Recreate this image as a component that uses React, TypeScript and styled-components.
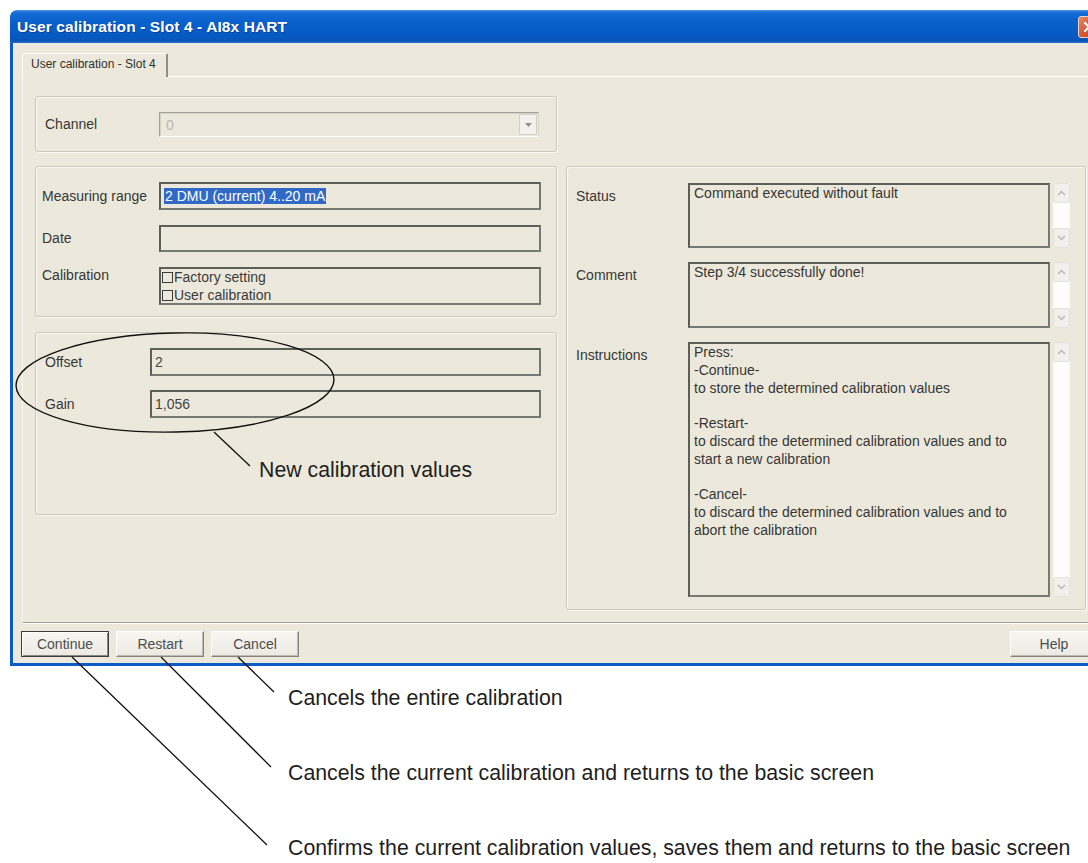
import React from "react";
import styled, { createGlobalStyle } from "styled-components";

const BEIGE = "#ECE9DC";
const FRAME_BLUE = "#0B5CC7";

const Global = createGlobalStyle`
  html, body {
    margin: 0;
    padding: 0;
    background: #ffffff;
  }
  body {
    font-family: "Liberation Sans", Arial, sans-serif;
    color: #333;
  }
  * { box-sizing: border-box; }
`;

const Page = styled.div`
  position: relative;
  width: 1088px;
  height: 863px;
  overflow: hidden;
  background: #fff;
  padding-top: 10px;
`;

/* ---------- dialog window ---------- */

const Window = styled.div`
  margin-left: 10px;
  width: 1095px;
  display: flex;
  flex-direction: column;
`;

const TitleBar = styled.div`
  height: 33px;
  border-radius: 7px 7px 0 0;
  background: linear-gradient(
    180deg,
    #4a94e6 0px,
    #1469d2 3px,
    #0a61cb 12px,
    #0659c2 26px,
    #0a55b8 31px,
    #2a72cf 33px
  );
  display: flex;
  align-items: center;
  padding: 0 5px 0 7px;
`;

const TitleText = styled.span`
  font-family: "Liberation Sans", Arial, sans-serif;
  font-weight: bold;
  font-size: 15.5px;
  color: #ffffff;
  text-shadow: 1px 1px 0 #0b3f9a;
  letter-spacing: 0.1px;
`;

const CloseButton = styled.div`
  margin-left: auto;
  width: 22px;
  height: 22px;
  border-radius: 3px;
  border: 1px solid #f4d2c4;
  background: linear-gradient(135deg, #e8876a 0%, #d45a35 50%, #c04421 100%);
  display: flex;
  align-items: center;
  justify-content: center;
`;

const Frame = styled.div`
  height: 623px;
  background: ${BEIGE};
  border: 3px solid ${FRAME_BLUE};
  border-top: none;
  display: flex;
  flex-direction: column;
  padding-top: 10px;
`;

/* ---------- tab control ---------- */

const TabStrip = styled.div`
  display: flex;
  height: 24px;
  padding-left: 9px;
`;

const Tab = styled.div`
  width: 146px;
  height: 24px;
  border-top: 1px solid #ffffff;
  border-left: 1px solid #ffffff;
  border-right: 2px solid #8f8e86;
  border-radius: 2px 2px 0 0;
  padding-left: 8px;
  font-size: 12px;
  line-height: 21px;
  color: #303030;
  white-space: nowrap;
`;

const TabFiller = styled.div`
  flex: 1;
  border-bottom: 1px solid #ffffff;
`;

const TabPage = styled.div`
  height: 546px;
  margin-left: 9px;
  border-left: 1px solid #f7f6f1;
  border-bottom: 1px solid #9e9c93;
  box-shadow: 0 1px 0 #ffffff;
  padding: 19px 0 0 12px;
`;

const Columns = styled.div`
  display: grid;
  grid-template-columns: 522px 520px;
  column-gap: 9px;
  align-items: start;
`;

const LeftColumn = styled.div`
  display: flex;
  flex-direction: column;
`;

const RightColumn = styled.div`
  padding-top: 70px;
`;

const GroupBox = styled.div<{ $h: number; $mt?: number }>`
  height: ${(p) => p.$h}px;
  margin-top: ${(p) => p.$mt ?? 0}px;
  border: 1px solid #cbc8bb;
  border-radius: 3px;
  box-shadow: inset 1px 1px 0 #faf9f4, 1px 1px 0 #faf9f4;
`;

/* ---------- form rows ---------- */

const ChannelRow = styled.div`
  display: flex;
  align-items: center;
  padding: 15px 0 0 9px;
`;

const FormGrid = styled.div<{ $label: number; $pt: number; $pl: number; $gap: number }>`
  display: grid;
  grid-template-columns: ${(p) => p.$label}px auto;
  row-gap: ${(p) => p.$gap}px;
  padding: ${(p) => p.$pt}px 0 0 ${(p) => p.$pl}px;
  align-items: center;
`;

const Label = styled.div<{ $w?: number; $top?: boolean }>`
  width: ${(p) => (p.$w ? `${p.$w}px` : "auto")};
  font-size: 14px;
  line-height: 17px;
  color: #363636;
  white-space: nowrap;
  align-self: ${(p) => (p.$top ? "start" : "center")};
`;

const Field = styled.div<{ $w: number; $h: number }>`
  width: ${(p) => p.$w}px;
  height: ${(p) => p.$h}px;
  border: 2px solid;
  border-color: #5a5f5a #767a75 #767a75 #5a5f5a;
  background: ${BEIGE};
  display: flex;
  align-items: center;
  padding: 0 3px;
  font-size: 14px;
  color: #444;
  white-space: nowrap;
`;

const Selected = styled.span`
  background: #3169c6;
  color: #ffffff;
  line-height: 16px;
  padding: 0 1px;
`;

const CheckList = styled(Field)`
  flex-direction: column;
  align-items: stretch;
  justify-content: flex-start;
  gap: 2px;
  padding: 0 1px;
`;

const CheckRow = styled.div`
  display: flex;
  align-items: center;
  height: 16px;
  font-size: 14px;
  color: #3a3a3a;
`;

const CheckBox = styled.span`
  width: 11px;
  height: 11px;
  border: 1px solid #3b3b3b;
  background: ${BEIGE};
  margin-right: 1px;
  flex: none;
`;

/* disabled combo box */

const Combo = styled.div`
  width: 380px;
  height: 25px;
  border: 1px solid;
  border-color: #a3a29a #d8d6cc #ffffff #a3a29a;
  box-shadow: inset 1px 1px 0 #d3d0c5;
  background: ${BEIGE};
  display: flex;
  align-items: center;
  padding: 0 1px 0 6px;
  font-size: 14px;
  color: #b9b7ad;
`;

const ComboArrow = styled.div`
  margin-left: auto;
  width: 18px;
  height: 21px;
  border: 1px solid #d2cfc4;
  border-radius: 1px;
  background: #f2f1ec;
  display: flex;
  align-items: center;
  justify-content: center;
`;

/* ---------- memo boxes with scroll bars ---------- */

const MemoStack = styled.div`
  display: flex;
  flex-direction: column;
  gap: 14px;
  padding: 16px 0 0 9px;
`;

const MemoRow = styled.div`
  display: flex;
  align-items: flex-start;
`;

const MemoLabel = styled.div`
  width: 112px;
  padding-top: 5px;
  font-size: 14px;
  line-height: 17px;
  color: #363636;
  white-space: nowrap;
`;

const Memo = styled.div<{ $h: number }>`
  width: 362px;
  height: ${(p) => p.$h}px;
  border: 2px solid;
  border-color: #5a5f5a #767a75 #767a75 #5a5f5a;
  background: ${BEIGE};
  padding: 0 4px;
  font-size: 14px;
  line-height: 17.8px;
  color: #363636;
  white-space: pre-line;
  overflow: hidden;
`;

const ScrollBar = styled.div<{ $h: number }>`
  width: 17px;
  height: ${(p) => p.$h}px;
  margin-left: 3px;
  display: flex;
  flex-direction: column;
  background: #fbfbf8;
`;

const ScrollButton = styled.div`
  height: 20px;
  border: 1px solid #e4e2d8;
  border-radius: 2px;
  background: #f1f0ea;
  display: flex;
  align-items: center;
  justify-content: center;
`;

const ScrollTrack = styled.div`
  flex: 1;
  margin: 0 2px;
  background: #fdfdfc;
`;

/* ---------- dialog buttons ---------- */

const ButtonRow = styled.div`
  display: flex;
  gap: 7px;
  margin-top: 8px;
  padding: 0 4px 0 8px;
`;

const DialogButton = styled.button<{ $default?: boolean; $push?: boolean }>`
  width: 88px;
  height: 26px;
  margin-left: ${(p) => (p.$push ? "auto" : "0")};
  font-family: "Liberation Sans", Arial, sans-serif;
  font-size: 14px;
  color: #4d4d4d;
  background: linear-gradient(180deg, #f7f6f1 0%, #eceae2 100%);
  padding: 0;
  border: 1px solid;
  border-color: ${(p) =>
    p.$default ? "#3c3c3c" : "#ffffff #85837c #85837c #ffffff"};
  box-shadow: ${(p) =>
    p.$default
      ? "inset 1px 1px 0 #ffffff, inset -1px -1px 0 #8a8880"
      : "inset -1px -1px 0 #bcbab1"};
`;

/* ---------- annotations ---------- */

const Notes = styled.div`
  display: flex;
  flex-direction: column;
  gap: 51px;
  margin-top: 20px;
  padding-left: 288px;
`;

const NoteText = styled.div`
  font-family: "Liberation Sans", Arial, sans-serif;
  font-size: 21.3px;
  line-height: 24px;
  color: #1e1e1e;
  white-space: nowrap;
`;

const FloatingNote = styled(NoteText)`
  position: absolute;
  left: 259px;
  top: 458px;
`;

const Overlay = styled.svg`
  position: absolute;
  left: 0;
  top: 0;
  pointer-events: none;
`;

const Chevron = ({ up }: { up?: boolean }) => (
  <svg width="9" height="6" viewBox="0 0 9 6">
    <polyline
      points={up ? "1,5 4.5,1.5 8,5" : "1,1 4.5,4.5 8,1"}
      fill="none"
      stroke="#b7b6b0"
      strokeWidth="1.4"
    />
  </svg>
);

const MemoWithBar = ({ h, text }: { h: number; text: string }) => (
  <>
    <Memo $h={h}>{text}</Memo>
    <ScrollBar $h={h}>
      <ScrollButton>
        <Chevron up />
      </ScrollButton>
      <ScrollTrack />
      <ScrollButton>
        <Chevron />
      </ScrollButton>
    </ScrollBar>
  </>
);

const instructions = `Press:
-Continue-
to store the determined calibration values

-Restart-
to discard the determined calibration values and to
start a new calibration

-Cancel-
to discard the determined calibration values and to
abort the calibration`;

export default function App() {
  return (
    <>
      <Global />
      <Page>
        <Window>
          <TitleBar>
            <TitleText>User calibration - Slot 4 - AI8x HART</TitleText>
            <CloseButton>
              <svg width="12" height="12" viewBox="0 0 12 12">
                <path d="M2 2 L10 10 M10 2 L2 10" stroke="#fff" strokeWidth="2.2" strokeLinecap="round" />
              </svg>
            </CloseButton>
          </TitleBar>
          <Frame>
            <TabStrip>
              <Tab>User calibration - Slot 4</Tab>
              <TabFiller />
            </TabStrip>
            <TabPage>
              <Columns>
                <LeftColumn>
                  <GroupBox $h={56}>
                    <ChannelRow>
                      <Label $w={114}>Channel</Label>
                      <Combo>
                        0
                        <ComboArrow>
                          <svg width="7" height="4" viewBox="0 0 7 4">
                            <path d="M0 0 H7 L3.5 4 Z" fill="#8f8e88" />
                          </svg>
                        </ComboArrow>
                      </Combo>
                    </ChannelRow>
                  </GroupBox>

                  <GroupBox $h={151} $mt={14}>
                    <FormGrid $label={117} $pt={15} $pl={6} $gap={15}>
                      <Label>Measuring range</Label>
                      <Field $w={382} $h={28}>
                        <Selected>2 DMU (current) 4..20 mA</Selected>
                      </Field>
                      <Label>Date</Label>
                      <Field $w={382} $h={27} />
                      <Label $top>Calibration</Label>
                      <CheckList $w={382} $h={38}>
                        <CheckRow>
                          <CheckBox />
                          Factory setting
                        </CheckRow>
                        <CheckRow>
                          <CheckBox />
                          User calibration
                        </CheckRow>
                      </CheckList>
                    </FormGrid>
                  </GroupBox>

                  <GroupBox $h={183} $mt={15}>
                    <FormGrid $label={105} $pt={15} $pl={9} $gap={14}>
                      <Label>Offset</Label>
                      <Field $w={391} $h={28}>2</Field>
                      <Label>Gain</Label>
                      <Field $w={391} $h={28}>1,056</Field>
                    </FormGrid>
                  </GroupBox>
                </LeftColumn>

                <RightColumn>
                  <GroupBox $h={444}>
                    <MemoStack>
                      <MemoRow>
                        <MemoLabel>Status</MemoLabel>
                        <MemoWithBar h={65} text="Command executed without fault" />
                      </MemoRow>
                      <MemoRow>
                        <MemoLabel>Comment</MemoLabel>
                        <MemoWithBar h={66} text="Step 3/4 successfully done!" />
                      </MemoRow>
                      <MemoRow>
                        <MemoLabel>Instructions</MemoLabel>
                        <MemoWithBar h={255} text={instructions} />
                      </MemoRow>
                    </MemoStack>
                  </GroupBox>
                </RightColumn>
              </Columns>
            </TabPage>
            <ButtonRow>
              <DialogButton $default>Continue</DialogButton>
              <DialogButton>Restart</DialogButton>
              <DialogButton>Cancel</DialogButton>
              <DialogButton $push>Help</DialogButton>
            </ButtonRow>
          </Frame>
        </Window>

        <Notes>
          <NoteText>Cancels the entire calibration</NoteText>
          <NoteText>Cancels the current calibration and returns to the basic screen</NoteText>
          <NoteText>
            Confirms the current calibration values, saves them and returns to the basic screen
          </NoteText>
        </Notes>

        <Overlay width="1088" height="863" viewBox="0 0 1088 863">
          <ellipse
            cx="175"
            cy="382.5"
            rx="159"
            ry="49.5"
            transform="rotate(-1.2 175 382.5)"
            fill="none"
            stroke="#111"
            strokeWidth="1.4"
          />
          <g stroke="#111" strokeWidth="1.3" fill="none">
            <line x1="214" y1="432" x2="250" y2="466" />
            <line x1="238" y1="657" x2="274" y2="692" />
            <line x1="161" y1="657" x2="271" y2="767" />
            <line x1="72" y1="657" x2="267" y2="845" />
          </g>
        </Overlay>
        <FloatingNote>New calibration values</FloatingNote>
      </Page>
    </>
  );
}
